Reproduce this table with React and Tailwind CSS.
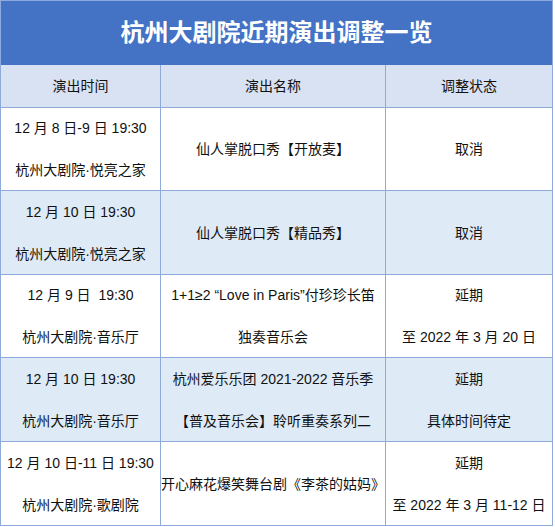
const rows = [
  {
    time: ["12 月 8 日-9 日 19:30", "杭州大剧院·悦亮之家"],
    name: ["仙人掌脱口秀【开放麦】"],
    status: ["取消"],
    h: "h-[83px]",
  },
  {
    time: ["12 月 10 日 19:30", "杭州大剧院·悦亮之家"],
    name: ["仙人掌脱口秀【精品秀】"],
    status: ["取消"],
    h: "h-[84px]",
  },
  {
    time: ["12 月 9 日  19:30", "杭州大剧院·音乐厅"],
    name: ["1+1≥2 “Love in Paris”付珍珍长笛", "独奏音乐会"],
    status: ["延期", "至 2022 年 3 月 20 日"],
    h: "h-[83px]",
  },
  {
    time: ["12 月 10 日 19:30", "杭州大剧院·音乐厅"],
    name: ["杭州爱乐乐团 2021-2022 音乐季", "【普及音乐会】聆听重奏系列二"],
    status: ["延期", "具体时间待定"],
    h: "h-[84px]",
  },
  {
    time: ["12 月 10 日-11 日 19:30", "杭州大剧院·歌剧院"],
    name: ["开心麻花爆笑舞台剧《李茶的姑妈》"],
    status: ["延期", "至 2022 年 3 月 11-12 日"],
    h: "h-[84px]",
  },
];

const Cell = ({ lines, last, h }) => (
  <div
    className={
      "flex flex-col items-center justify-center text-center border-t border-[#8eaadb] " +
      h +
      (last ? "" : " border-r")
    }
  >
    {lines.map((l, i) => (
      <div key={i} className="leading-[42px] whitespace-pre">
        {l}
      </div>
    ))}
  </div>
);

export default function App() {
  return (
    <div
      className="w-[553px] border border-[#8eaadb] text-[14px] text-[#111]"
      style={{ fontFamily: '"Liberation Sans", "Noto Sans CJK SC", sans-serif' }}
    >
      <div className="h-[64px] bg-[#4472c4] flex items-center justify-center text-white font-bold text-[24px]">
        杭州大剧院近期演出调整一览
      </div>
      <div className="grid grid-cols-[160px_225px_1fr]">
        {["演出时间", "演出名称", "调整状态"].map((h, i) => (
          <div
            key={h}
            className={
              "h-[42px] flex items-center justify-center bg-[#d9e2f3] border-[#8eaadb] " +
              (i < 2 ? "border-r" : "")
            }
          >
            {h}
          </div>
        ))}
        {rows.map((r, i) => (
          <div
            key={i}
            className={"contents " + (i % 2 === 1 ? "[&>div]:bg-[#deeaf6]" : "[&>div]:bg-white")}
          >
            <Cell lines={r.time} h={r.h} />
            <Cell lines={r.name} h={r.h} />
            <Cell lines={r.status} h={r.h} last />
          </div>
        ))}
      </div>
    </div>
  );
}
